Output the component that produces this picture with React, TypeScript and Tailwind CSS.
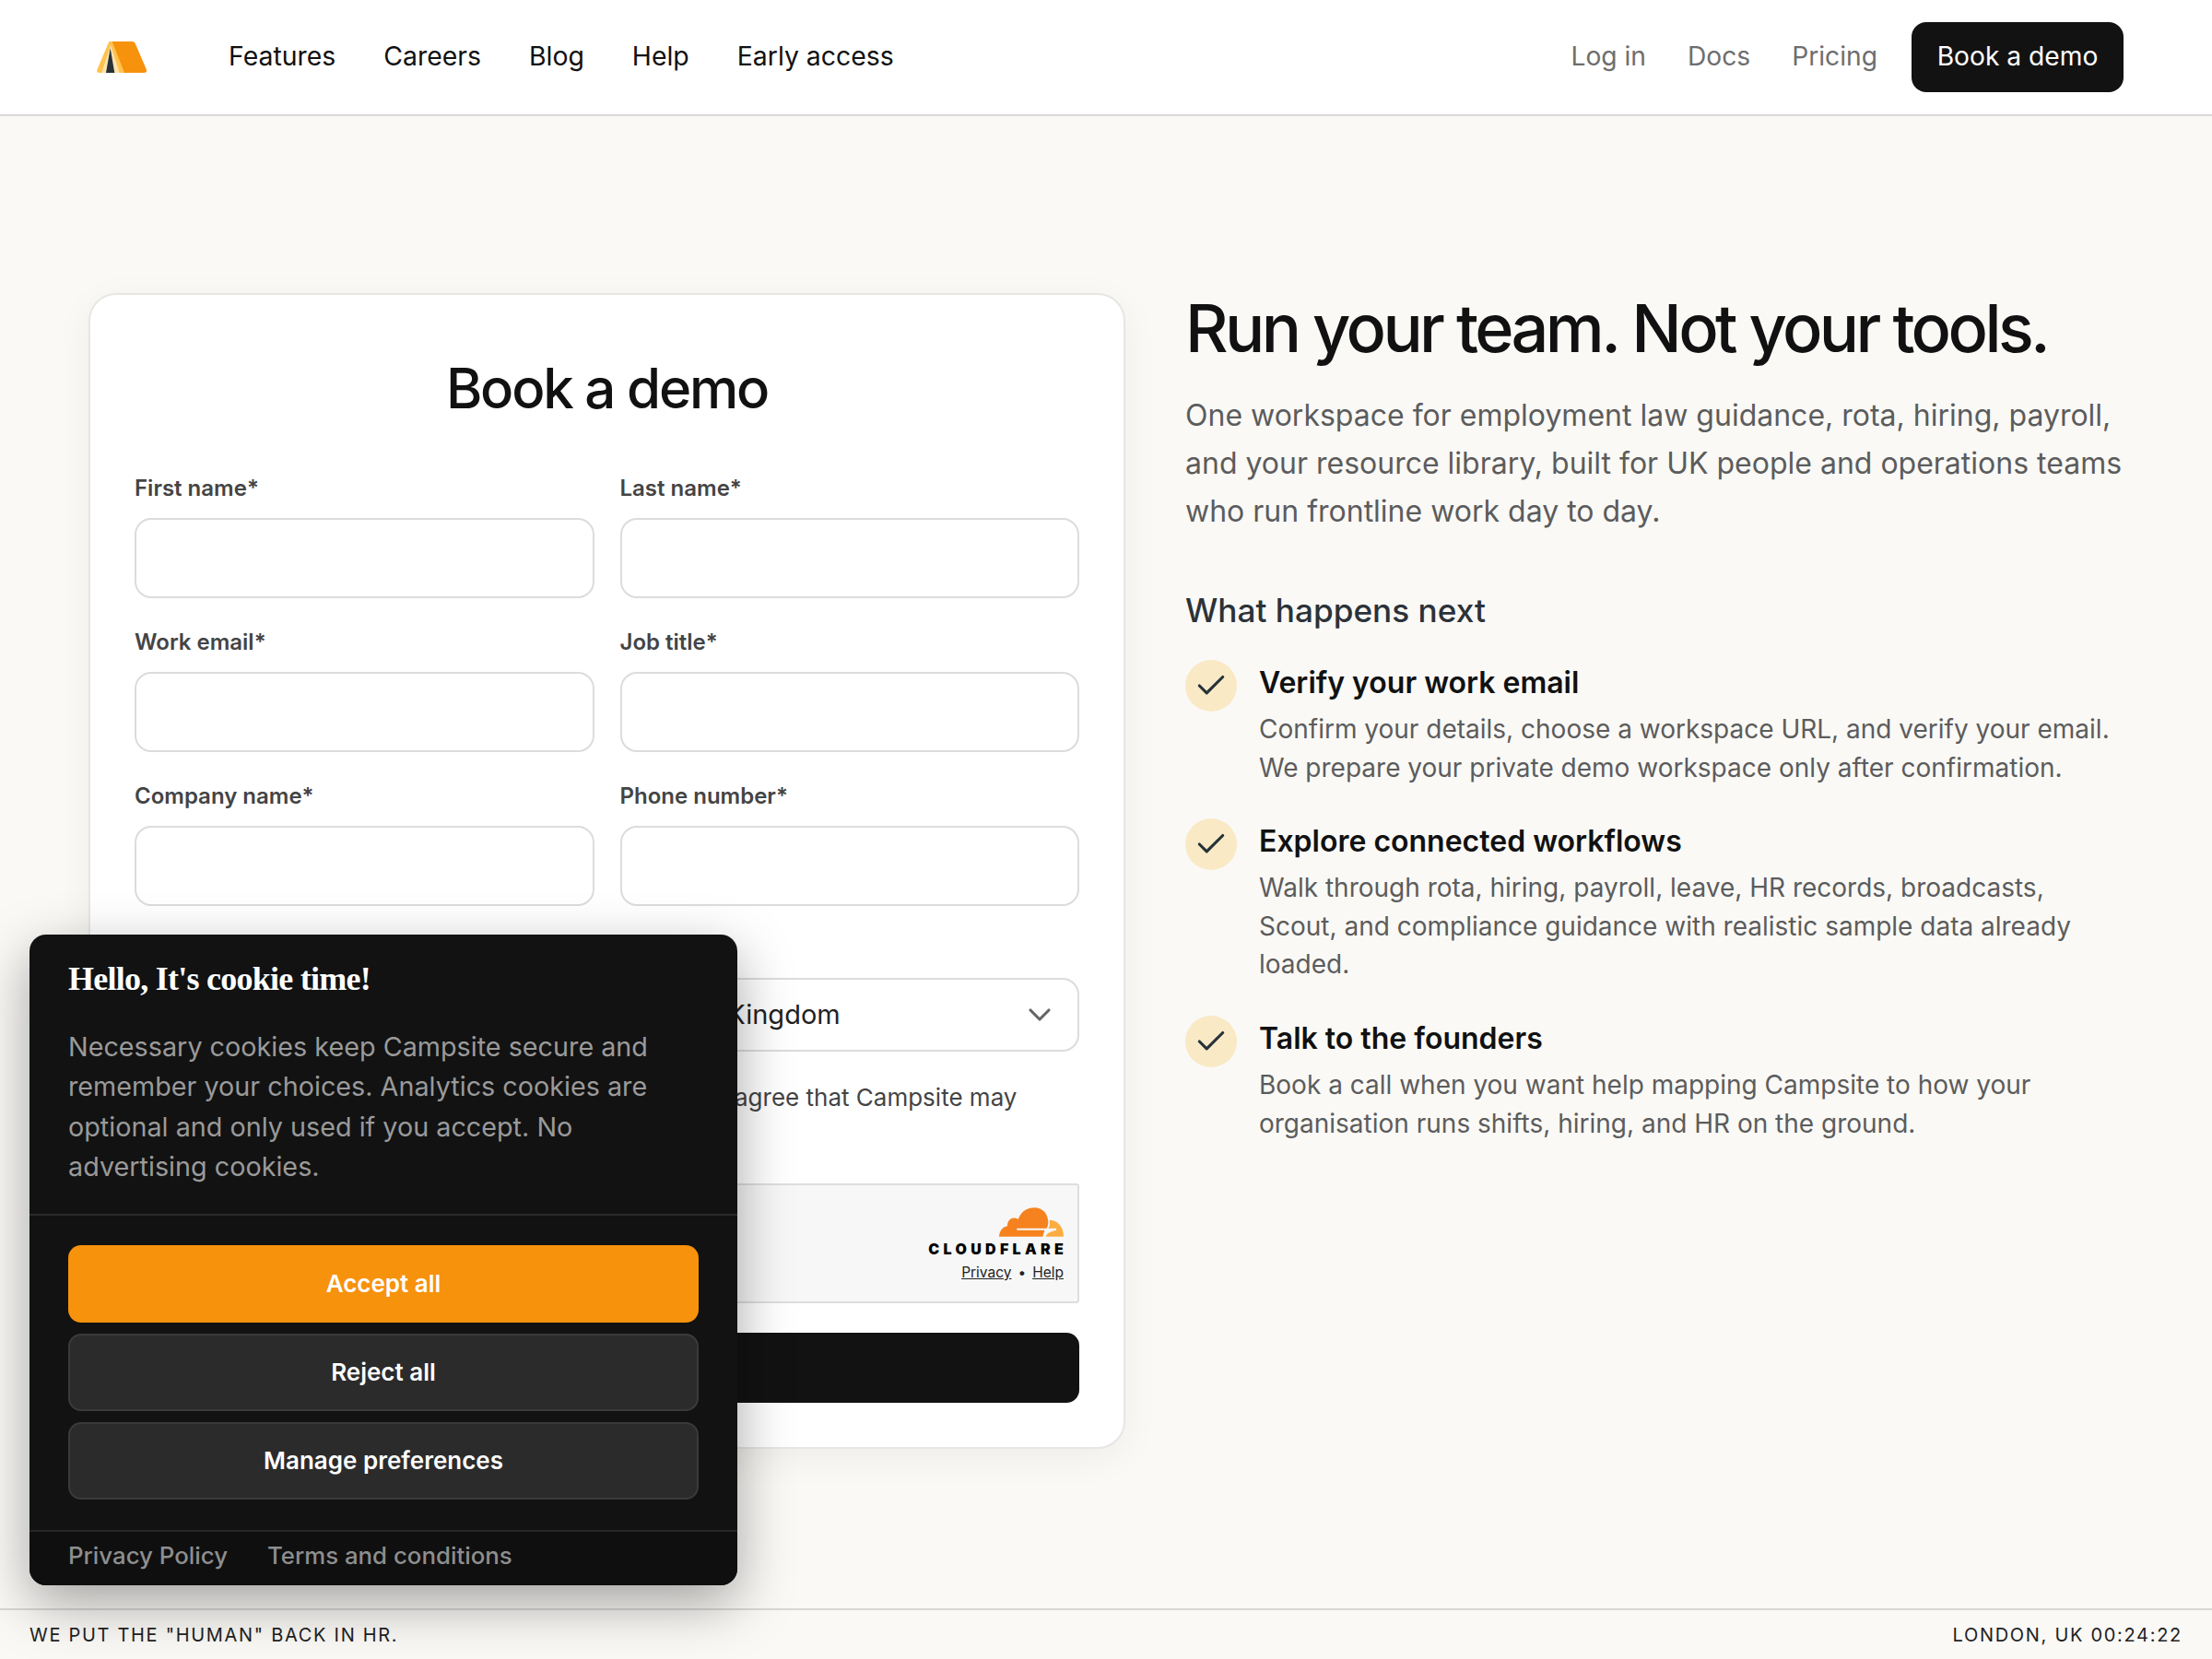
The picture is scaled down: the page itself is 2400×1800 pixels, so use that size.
import React from "react";
import { Check, ChevronDown } from "lucide-react";

const inter = { fontFamily: "Inter, sans-serif" };

function Logo() {
  return (
    <svg width="54" height="34" viewBox="0 0 162 102" className="block">
      <path d="M48 0H116Q122 0 125 6L162 92Q164 102 154 102H60Z" fill="#F7920D" />
      <path d="M40 0H50L90 102H8Q-2 102 1 92Z" fill="#FFC24F" />
      <path d="M45 12L16 102H74Z" fill="#FFE3AC" />
      <path d="M44 22L30 102H58Z" fill="#263238" />
    </svg>
  );
}

function Cloud() {
  return (
    <svg width="70" height="32" viewBox="0 0 210 95" className="block">
      <path d="M0 95C1 76 12 62 27 60C26 42 42 26 62 38C72 12 92 0 115 0C142 0 160 20 160 50C160 56 158 62 155 68H58V74H148C146 80 144 88 142 95Z" fill="#F6821F" />
      <path d="M163 41C190 41 210 62 210 95H152C156 85 162 80 186 74V68H160C166 60 166 50 163 41Z" fill="#FBAD41" />
    </svg>
  );
}

function Field({ label }: { label: string }) {
  return (
    <div className="flex flex-col">
      <label className="text-[24px] leading-[32px] font-semibold text-[#444444] mb-[16px]">{label}</label>
      <div className="h-[87px] rounded-[18px] border-2 border-[#dcdcdc] bg-white" />
    </div>
  );
}

function SelectField({ label, value }: { label: string; value: string }) {
  return (
    <div className="flex flex-col">
      <label className="h-[32px] text-[24px] leading-[32px] font-semibold text-[#444444] mb-[14px]">{label}</label>
      <div className="h-[80px] rounded-[18px] border-2 border-[#dcdcdc] bg-white flex items-center justify-between pl-[17px] pr-[21px] text-[29px] text-[#222222]">
        <span>{value}</span>
        <ChevronDown size={40} strokeWidth={1.9} className="text-[#666666]" />
      </div>
    </div>
  );
}

const steps = [
  {
    title: "Verify your work email",
    lines: ["Confirm your details, choose a workspace URL, and verify your email.", "We prepare your private demo workspace only after confirmation."],
  },
  {
    title: "Explore connected workflows",
    lines: ["Walk through rota, hiring, payroll, leave, HR records, broadcasts,", "Scout, and compliance guidance with realistic sample data already", "loaded."],
  },
  {
    title: "Talk to the founders",
    lines: ["Book a call when you want help mapping Campsite to how your", "organisation runs shifts, hiring, and HR on the ground."],
  },
];

export default function App() {
  return (
    <div style={inter} className="relative h-[1800px] w-[2400px] overflow-hidden bg-[#faf9f6] flex flex-col text-[#111111]">
      <header className="h-[126px] shrink-0 bg-white border-b-2 border-[#d8d8d6] flex items-center pl-[105px] pr-[96px]">
        <Logo />
        <nav className="ml-[89px] flex gap-[52px] pb-[2px] text-[28.4px] text-[#111111]">
          <span>Features</span>
          <span>Careers</span>
          <span>Blog</span>
          <span>Help</span>
          <span>Early access</span>
        </nav>
        <div className="ml-auto flex items-center gap-[45px] text-[28.2px] text-[#6e6e6e]">
          <span className="pb-[2px]">Log in</span>
          <span className="pb-[2px]">Docs</span>
          <span className="pb-[2px]">Pricing</span>
          <span className="ml-[-8px] h-[76px] w-[230px] pb-[2px] rounded-[16px] bg-[#121212] text-white flex items-center justify-center">Book a demo</span>
        </div>
      </header>

      <main className="flex-1 min-h-0 pl-[96px] pt-[192px] flex gap-[65px]">
        <section className="w-[1125px] h-[1254px] shrink-0 rounded-[30px] border-2 border-[#e6e6e3] bg-white px-[48px] pt-[63px] shadow-[0_10px_40px_rgba(0,0,0,0.05)]">
          <h2 className="text-center text-[60px] leading-[76px] font-medium tracking-[-2.2px] text-[#111111] mb-[55px]">Book a demo</h2>
          <div className="grid grid-cols-2 gap-x-[28px] gap-y-[32px]">
            <Field label="First name*" />
            <Field label="Last name*" />
            <Field label="Work email*" />
            <Field label="Job title*" />
            <Field label="Company name*" />
            <Field label="Phone number*" />
            <SelectField label="" value="" />
            <SelectField label="Country*" value="United Kingdom" />
          </div>
          <div className="mt-[31px] h-[76px] pl-[651px] text-[26px] leading-[38px] text-[#444444] whitespace-nowrap">
            <p>agree that Campsite may</p>
          </div>
          <div className="mt-[36px] h-[130px] rounded-[3px] border-2 border-[#dedede] bg-[#f7f7f7] flex justify-end pr-[15px] pt-[24px]">
            <div className="flex flex-col items-end">
              <Cloud />
              <span className="mt-[4px] text-[16px] leading-[18px] font-black tracking-[4.3px] mr-[-4px] text-black">CLOUDFLARE</span>
              <div className="mt-[7px] flex items-center gap-[7px] text-[15.5px] leading-[20px] text-[#222222]">
                <span className="underline">Privacy</span>
                <span>•</span>
                <span className="underline">Help</span>
              </div>
            </div>
          </div>
          <div className="mt-[32px] h-[76px] rounded-[14px] bg-[#121212]" />
        </section>

        <section className="w-[1019px]">
          <h1 className="text-[72px] leading-[80px] font-medium tracking-[-3.6px] text-[#111111] mt-[-2px] whitespace-nowrap">Run your team. Not your tools.</h1>
          <p className="mt-[28.5px] text-[32px] leading-[52px] text-[#5c5c5c] whitespace-nowrap">
            One workspace for employment law guidance, rota, hiring, payroll,
            <br />
            and your resource library, built for UK people and operations teams
            <br />
            who run frontline work day to day.
          </p>
          <h3 className="mt-[57px] text-[35.2px] leading-[48px] font-medium text-[#2b3238]">What happens next</h3>
          <div className="mt-[30.5px] flex flex-col gap-[34px]">
            {steps.map((s) => (
              <div key={s.title} className="flex gap-[24px]">
                <div className="size-[56px] shrink-0 rounded-full bg-[#f9e9c5] flex items-center justify-center text-[#263238]">
                  <Check size={38} strokeWidth={2} />
                </div>
                <div className="pt-[3px]">
                  <div className="text-[32px] leading-[44px] font-semibold text-[#111111]">{s.title}</div>
                  <div className="mt-[8px] text-[28px] leading-[41.6px] text-[#5c5c5c] whitespace-nowrap">
                    {s.lines.map((l) => (
                      <div key={l}>{l}</div>
                    ))}
                  </div>
                </div>
              </div>
            ))}
          </div>
        </section>
      </main>

      <footer className="h-[55px] shrink-0 border-t-2 border-[#d8d8d6] flex items-center justify-between px-[32px] text-[20px] tracking-[1.7px] text-[#222222]">
        <span>WE PUT THE "HUMAN" BACK IN HR.</span>
        <span>LONDON, UK 00:24:22</span>
      </footer>

      <div className="absolute left-[32px] top-[1014px] w-[768px] h-[706px] rounded-[18px] bg-[#121212] shadow-[0_20px_60px_rgba(0,0,0,0.35)] flex flex-col overflow-hidden">
        <div className="px-[42px] pt-[24px] border-b-2 border-[#2a2a2a] h-[305px]">
          <div style={{ fontFamily: '"Liberation Serif", serif' }} className="text-[36px] leading-[48px] font-bold tracking-[-0.75px] text-white">
            Hello, It's cookie time!
          </div>
          <p className="mt-[28px] text-[28.75px] leading-[43.4px] text-[#9a9a9a] whitespace-nowrap">
            Necessary cookies keep Campsite secure and
            <br />
            remember your choices. Analytics cookies are
            <br />
            optional and only used if you accept. No
            <br />
            advertising cookies.
          </p>
        </div>
        <div className="px-[42px] pt-[32px] flex flex-col gap-[12px] text-[26px] font-semibold text-white h-[341px]">
          <div className="h-[84px] pb-[2px] rounded-[14px] bg-[#f7920d] flex items-center justify-center">Accept all</div>
          <div className="h-[84px] pb-[2px] rounded-[14px] bg-[#2b2b2b] border-2 border-[#3a3a3a] flex items-center justify-center">Reject all</div>
          <div className="h-[84px] pb-[2px] rounded-[14px] bg-[#2b2b2b] border-2 border-[#3a3a3a] flex items-center justify-center">Manage preferences</div>
        </div>
        <div className="flex-1 bg-[#0f0f0f] border-t-2 border-[#262626] px-[42px] pb-[6px] flex items-center gap-[43px] text-[25.8px] font-medium text-[#8e8e8e]">
          <span>Privacy Policy</span>
          <span>Terms and conditions</span>
        </div>
      </div>
    </div>
  );
}
